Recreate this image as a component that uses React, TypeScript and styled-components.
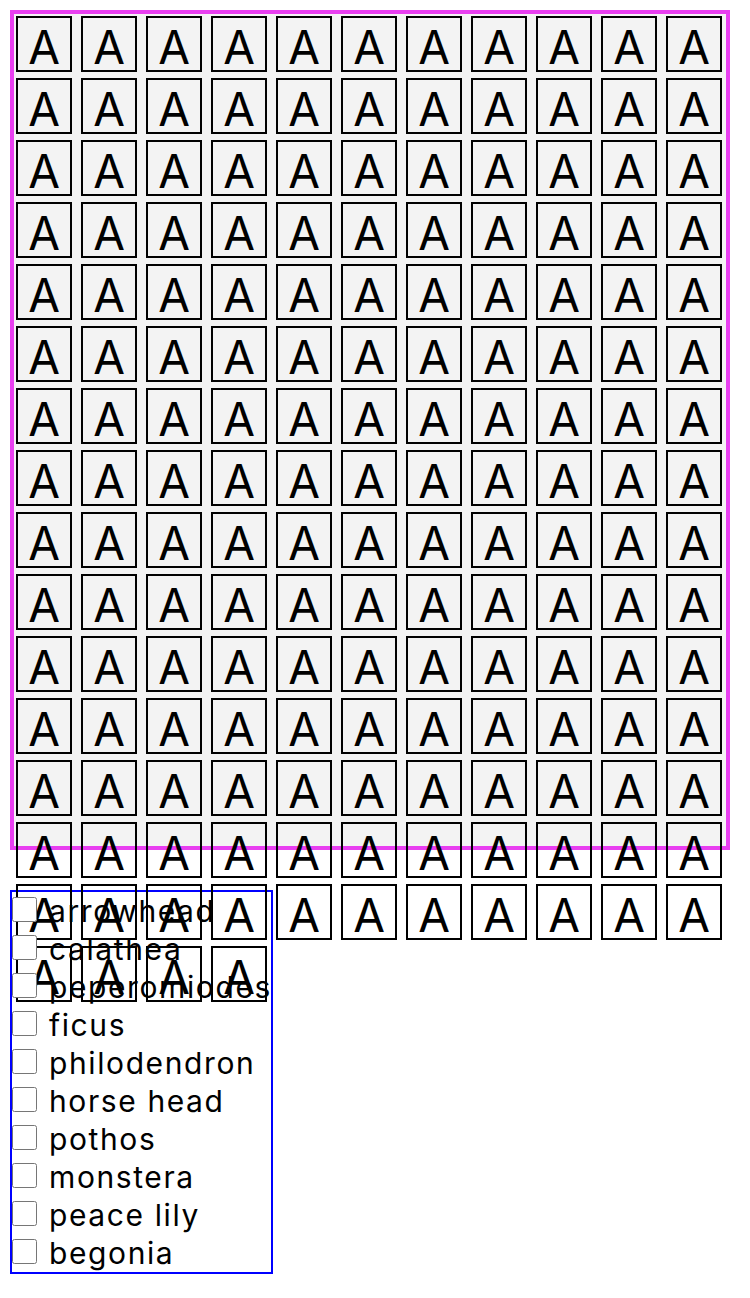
import React from "react";
import styled, { createGlobalStyle } from "styled-components";

const GlobalStyle = createGlobalStyle`
  body {
    margin: 0;
    padding: 10px;
    background: #ffffff;
    font-family: Inter, "Liberation Sans", sans-serif;
    color: #000000;
  }
`;

const Board = styled.div`
  box-sizing: border-box;
  width: 720px;
  height: 840px;
  border: 4px solid #e83ff0;
  background-color: #f3f3f3;
  padding: 2px;
  display: grid;
  grid-template-columns: repeat(11, 56px);
  grid-auto-rows: 56px;
  column-gap: 9px;
  row-gap: 6px;
  align-content: start;
`;

const Tile = styled.div`
  box-sizing: border-box;
  width: 56px;
  height: 56px;
  border: 2px solid #000000;
  display: flex;
  align-items: center;
  justify-content: center;
  font-size: 46px;
  line-height: 1;
  padding-top: 5px;
`;

const PlantList = styled.div`
  box-sizing: border-box;
  width: 263px;
  margin-top: 40px;
  border: 2px solid #0000ff;
`;

const PlantRow = styled.label`
  display: block;
  height: 38px;
  font-size: 30px;
  line-height: 38px;
  letter-spacing: 1.6px;
  white-space: nowrap;

  input {
    width: 25px;
    height: 25px;
    margin: 0 12px 0 0;
  }
`;

const plants = [
  "arrowhead",
  "calathea",
  "peperomiodes",
  "ficus",
  "philodendron",
  "horse head",
  "pothos",
  "monstera",
  "peace lily",
  "begonia",
];

const App: React.FC = () => {
  return (
    <>
      <GlobalStyle />
      <Board>
        {Array.from({ length: 169 }).map((_, index) => (
          <Tile key={index}>A</Tile>
        ))}
      </Board>
      <PlantList>
        {plants.map((plant) => (
          <PlantRow key={plant}>
            <input type="checkbox" />
            {plant}
          </PlantRow>
        ))}
      </PlantList>
    </>
  );
};

export default App;
